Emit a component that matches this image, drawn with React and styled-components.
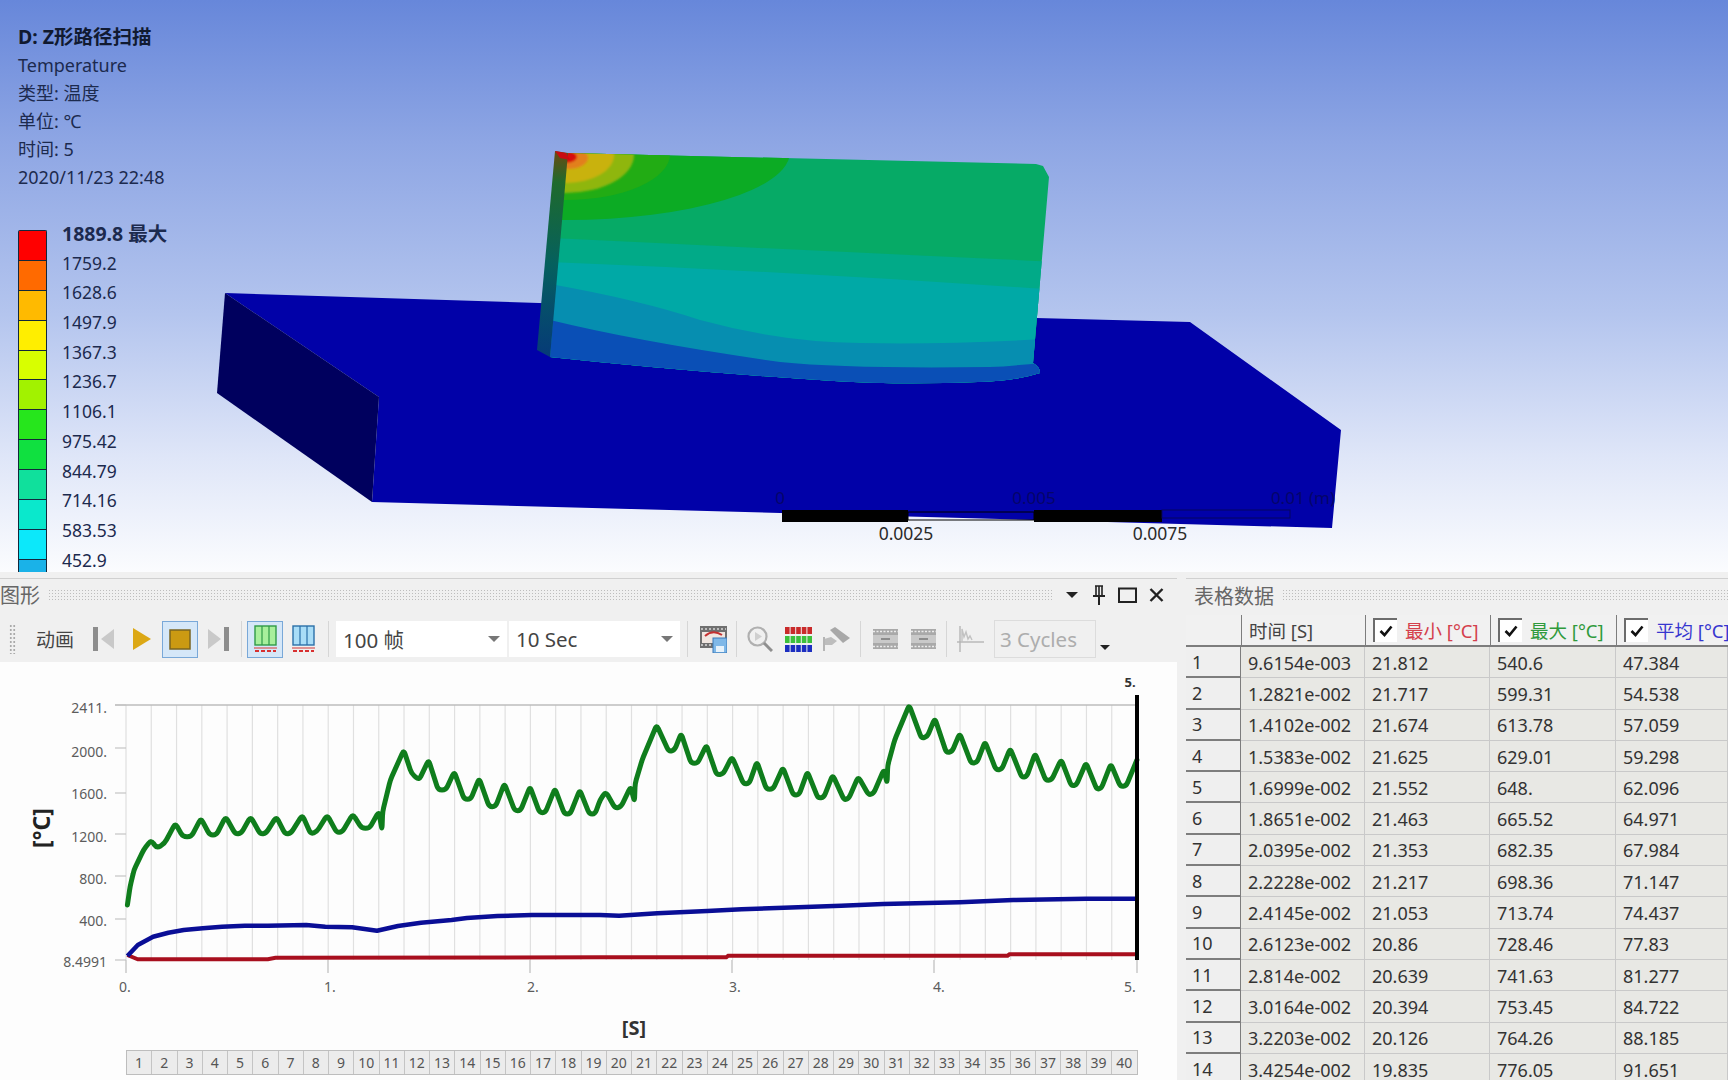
import React from 'react';
import styled, { createGlobalStyle } from 'styled-components';

const FONT = '"Noto Sans", "Noto Sans CJK SC", sans-serif';

const GlobalStyle = createGlobalStyle`
  html, body {
    margin: 0;
    padding: 0;
    background: #f0f0f0;
    overflow: hidden;
  }
  body {
    font-family: ${FONT};
  }
`;

const Page = styled.div`
  width: 1728px;
  height: 1080px;
  display: flex;
  flex-direction: column;
  overflow: hidden;
  background: #f0f0f0;
`;

/* ---------- 3D viewport ---------- */

const Viewport = styled.div`
  position: relative;
  height: 572px;
  flex: none;
  overflow: hidden;
  padding: 23px 0 0 18px;
  box-sizing: border-box;
  background: linear-gradient(#6787da 0%, #8ea6e4 25%, #b4c5ee 55%, #dfe6f8 80%, #fbfcfe 100%);
`;

const Scene = styled.svg`
  position: absolute;
  left: 0;
  top: 0;
`;

const Annotation = styled.div`
  position: relative;
  display: flex;
  flex-direction: column;
  color: #1c2a4e;
  font-size: 18px;
  line-height: 28px;
  white-space: nowrap;
`;

const AnnotationTitle = styled.div`
  font-size: 19.5px;
  font-weight: 700;
  color: #111a30;
`;

const Legend = styled.div`
  position: relative;
  display: flex;
  margin-top: 31px;
  align-items: flex-start;
  gap: 15px;
`;

const LegendBar = styled.div`
  width: 29px;
  display: flex;
  flex-direction: column;
  border: 1px solid #12283c;
  border-bottom: none;
  border-radius: 2px 2px 0 0;
  box-sizing: border-box;
  margin-top: 8px;
`;

const Swatch = styled.div`
  height: 29.9px;
  background: ${({ $color }) => $color};
  border-bottom: 1.5px solid #12283c;
  box-sizing: border-box;
`;

const LegendLabels = styled.div`
  display: flex;
  flex-direction: column;
  margin-top: -3px;
`;

const LegendLabel = styled.div`
  height: 29.7px;
  line-height: 29.7px;
  font-size: ${({ $bold }) => ($bold ? 19.5 : 17.5)}px;
  color: #1c2a4e;
  white-space: nowrap;
  font-weight: ${({ $bold }) => ($bold ? 700 : 400)};
`;

/* ---------- lower dock ---------- */

const Dock = styled.div`
  flex: 1;
  display: flex;
  min-height: 0;
  padding-top: 6px;
  gap: 9px;
`;

const LeftPanel = styled.section`
  width: 1177px;
  flex: none;
  display: flex;
  flex-direction: column;
  border-top: 1px solid #d0d0d0;
`;

const RightPanel = styled.section`
  flex: 1;
  min-width: 0;
  display: flex;
  flex-direction: column;
  border-top: 1px solid #d0d0d0;
`;

const PanelHeader = styled.header`
  height: ${({ $height }) => $height}px;
  flex: none;
  display: flex;
  align-items: center;
  gap: 8px;
  box-sizing: border-box;
  padding-left: ${({ $inset }) => $inset}px;
  padding-bottom: ${({ $lift }) => $lift || 0}px;
  color: #666;
  font-size: 20px;
`;

const Hatch = styled.div`
  flex: 1;
  height: 12px;
  background-image: radial-gradient(#bdbdbd 0.8px, transparent 1px);
  background-size: 3px 3px;
`;

const PanelControls = styled.div`
  display: flex;
  align-items: center;
  gap: 12px;
  margin: 0 13px 0 4px;
`;

const Toolbar = styled.div`
  height: 50px;
  flex: none;
  display: flex;
  align-items: center;
  gap: 2px;
  padding: 4px 0 0 9px;
  box-sizing: border-box;
  color: #444;
`;

const Grip = styled.div`
  width: 7px;
  height: 30px;
  margin-right: 18px;
  background-image: radial-gradient(#aaa 0.9px, transparent 1.1px);
  background-size: 3.5px 4px;
`;

const ToolLabel = styled.span`
  font-size: 19px;
  width: 39px;
  margin-right: 9px;
  white-space: nowrap;
`;

const ToolButton = styled.div`
  width: 36px;
  height: 37px;
  flex: none;
  display: grid;
  place-content: center;
  box-sizing: border-box;
  border: 1.5px solid ${({ $active }) => ($active ? '#79a8d8' : 'transparent')};
  background: ${({ $active }) => ($active ? '#d5e7f8' : 'transparent')};
`;

const Separator = styled.div`
  width: 1px;
  height: 36px;
  flex: none;
  background: #d6d6d6;
  margin: 0 ${({ $space }) => $space}px;
`;

const Select = styled.div`
  width: 171px;
  height: 36px;
  flex: none;
  display: flex;
  align-items: center;
  justify-content: space-between;
  box-sizing: border-box;
  padding: 0 7px;
  background: #fff;
  color: #444;
  font-size: 20.5px;
  white-space: nowrap;
`;

const Caret = styled.span`
  width: 0;
  height: 0;
  flex: none;
  border-left: ${({ $size }) => $size}px solid transparent;
  border-right: ${({ $size }) => $size}px solid transparent;
  border-top: ${({ $size }) => $size}px solid ${({ $color }) => $color};
`;

const MenuCaret = styled(Caret)`
  margin-right: 2px;
`;

const CycleBox = styled.div`
  width: 102px;
  height: 38px;
  flex: none;
  display: flex;
  align-items: center;
  box-sizing: border-box;
  margin-left: 4px;
  padding-left: 5px;
  border: 1.5px solid #dcdcdc;
  color: #adadad;
  font-size: 20.5px;
  white-space: nowrap;
`;

const CycleCaret = styled.div`
  display: flex;
  margin: 16px 0 0 2px;
`;

const ChartArea = styled.div`
  flex: 1;
  min-height: 0;
  display: flex;
  flex-direction: column;
  background: #fdfdfd;
`;

const Chart = styled.svg`
  display: block;
  flex: none;
`;

const ChartText = styled.text`
  font-family: ${FONT};
  font-size: ${({ $size }) => $size || 14}px;
  font-weight: ${({ $bold }) => ($bold ? 700 : 400)};
  fill: ${({ $color }) => $color || '#5c5c5c'};
`;

const FrameStrip = styled.div`
  display: grid;
  grid-template-columns: repeat(40, 1fr);
  width: 1012px;
  height: 25px;
  margin-left: 126px;
  box-sizing: border-box;
  border: 1px solid #bdbdbd;
  background: #ececec;
`;

const FrameCell = styled.div`
  display: grid;
  place-content: center;
  border-right: 1px solid #c4c4c4;
  color: #555;
  font-size: 14px;
  &:last-child {
    border-right: none;
  }
`;

/* ---------- table ---------- */

const Table = styled.div`
  flex: 1;
  min-height: 0;
  overflow: hidden;
  display: flex;
  flex-direction: column;
  color: #333;
  font-size: 18px;
`;

const HeaderRow = styled.div`
  height: 32px;
  flex: none;
  display: grid;
  grid-template-columns: 55px 124px 125px 126px 1fr;
  background: #f1f1f1;
  border-bottom: 2px solid #7d7d7d;
  box-sizing: border-box;
`;

const HeaderCell = styled.div`
  display: flex;
  align-items: center;
  gap: 8px;
  padding-left: 7px;
  box-sizing: border-box;
  border-left: ${({ $plain }) => ($plain ? 'none' : '1.5px solid #7d7d7d')};
  color: ${({ $color }) => $color || '#444'};
  font-size: 18.5px;
  white-space: nowrap;
`;

const CheckBox = styled.div`
  width: 24px;
  height: 24px;
  flex: none;
  display: grid;
  place-content: center;
  box-sizing: border-box;
  background: #fff;
  border-top: 2px solid #6c6c6c;
  border-left: 2px solid #6c6c6c;
`;

const DataRow = styled.div`
  height: 31.3px;
  flex: none;
  display: grid;
  grid-template-columns: 55px 124px 125px 126px 1fr;
  box-sizing: border-box;
`;

const RowHead = styled.div`
  display: flex;
  align-items: center;
  padding-left: 6px;
  background: #efefef;
  border-bottom: 2px solid #7d7d7d;
  border-right: 1.5px solid #7d7d7d;
  box-sizing: border-box;
`;

const DataCell = styled.div`
  display: flex;
  align-items: center;
  padding: 1px 0 0 7px;
  box-sizing: border-box;
  background: #e8e8e4;
  border-right: 1px solid #c9c9c9;
  border-bottom: 1px solid #c9c9c9;
  white-space: nowrap;
`;

/* ---------- data ---------- */

const LEGEND_COLORS = ['#ff0000', '#ff6a00', '#ffba00', '#ffee00', '#d8ff00', '#a2f200', '#26e61c', '#10e040', '#10e09c', '#0ae8cc', '#0ce8fa', '#1ab2e8'];
const LEGEND_LABELS = ['1889.8 最大', '1759.2', '1628.6', '1497.9', '1367.3', '1236.7', '1106.1', '975.42', '844.79', '714.16', '583.53', '452.9'];

const ROWS = [
  ['9.6154e-003', '21.812', '540.6', '47.384'],
  ['1.2821e-002', '21.717', '599.31', '54.538'],
  ['1.4102e-002', '21.674', '613.78', '57.059'],
  ['1.5383e-002', '21.625', '629.01', '59.298'],
  ['1.6999e-002', '21.552', '648.', '62.096'],
  ['1.8651e-002', '21.463', '665.52', '64.971'],
  ['2.0395e-002', '21.353', '682.35', '67.984'],
  ['2.2228e-002', '21.217', '698.36', '71.147'],
  ['2.4145e-002', '21.053', '713.74', '74.437'],
  ['2.6123e-002', '20.86', '728.46', '77.83'],
  ['2.814e-002', '20.639', '741.63', '81.277'],
  ['3.0164e-002', '20.394', '753.45', '84.722'],
  ['3.2203e-002', '20.126', '764.26', '88.185'],
  ['3.4254e-002', '19.835', '776.05', '91.651'],
];

// traces were read off two crops of the plot, so they are kept per crop and mapped to page px
const fromLeft = ([x, y]) => [x / 2.613, 680 + y / 3];
const fromRight = ([x, y]) => [600 + x / 2.613, 680 + y / 3];
const toPage = (left, right) => [...left.map(fromLeft), ...right.map(fromRight)];
const toPoints = (points) => points.map(([x, y]) => `${x.toFixed(1)},${y.toFixed(1)}`).join(' ');

// line through the points with each corner eased over a short distance, for the scalloped trace
const toRoundedPath = (points, radius) => {
  const toward = (a, b) => {
    const len = Math.hypot(b[0] - a[0], b[1] - a[1]) || 1;
    const r = Math.min(radius, len / 2);
    return [a[0] + ((b[0] - a[0]) / len) * r, a[1] + ((b[1] - a[1]) / len) * r];
  };
  let d = `M${points[0][0].toFixed(1)} ${points[0][1].toFixed(1)}`;
  for (let i = 1; i < points.length - 1; i++) {
    const start = toward(points[i], points[i - 1]);
    const end = toward(points[i], points[i + 1]);
    d += `L${start[0].toFixed(1)} ${start[1].toFixed(1)}Q${points[i][0].toFixed(1)} ${points[i][1].toFixed(1)} ${end[0].toFixed(1)} ${end[1].toFixed(1)}`;
  }
  const last = points[points.length - 1];
  return `${d}L${last[0].toFixed(1)} ${last[1].toFixed(1)}`;
};

const GREEN = toRoundedPath(toPage(
  [[333,675],[340,620],[350,570],[375,510],[395,480],[410,505],[430,490],[458,430],[478,470],[500,470],[525,415],[548,465],[565,465],[590,410],[615,462],[630,460],[655,410],[680,462],[695,460],[722,410],[745,462],[760,460],[790,405],[812,462],[828,455],[855,405],[880,458],[895,455],[922,402],[945,445],[965,445],[990,395],[998,450],[1000,395],[1020,300],[1055,210],[1075,280],[1095,300],[1120,240],[1145,330],[1165,330],[1187,275],[1213,358],[1230,358],[1252,295],[1278,380],[1295,380],[1318,310],[1345,392],[1360,392],[1385,320],[1410,398],[1425,398],[1450,325],[1475,402],[1490,402],[1515,330],[1540,402],[1555,402]],
  [[0,360],[15,335],[40,385],[55,380],[80,320],[90,365],[92,310],[110,240],[148,135],[180,215],[195,210],[212,160],[238,250],[255,250],[278,195],[305,285],[322,282],[345,230],[375,312],[390,310],[410,245],[435,328],[452,328],[478,262],[505,345],[520,345],[542,275],[570,355],[585,352],[608,285],[638,360],[650,355],[675,290],[702,345],[715,340],[742,268],[750,310],[752,255],[770,180],[808,75],[840,175],[855,170],[875,115],[905,218],[920,215],[940,160],[970,250],[985,248],[1006,185],[1035,270],[1050,268],[1072,205],[1102,292],[1115,290],[1137,220],[1165,302],[1180,300],[1205,238],[1232,318],[1245,315],[1270,248],[1298,328],[1310,325],[1335,252],[1360,320],[1375,318],[1403,240]]
), 4);

const BLUE = toPoints(toPage(
  [[333,828],[360,795],[400,770],[440,758],[480,750],[530,745],[580,740],[640,737],[700,737],[800,735],[850,740],[920,742],[985,752],[1040,738],[1100,728],[1180,720],[1220,714],[1300,708],[1390,705]],
  [[0,705],[50,707],[150,700],[280,693],[370,688],[480,683],[630,677],[740,672],[940,667],[1080,660],[1270,656],[1403,656]]
));

const RED = toPoints(toPage(
  [[333,825],[360,838],[700,838],[720,833]],
  [[0,832],[330,832],[335,827],[1065,827],[1070,823],[1403,823]]
));

const PLOT_LEFT = 126;
const PLOT_RIGHT = 1137;
const Y_TICKS = [[705, 708, '2411.'], [748, 752, '2000.'], [793, 794, '1600.'], [834, 837, '1200.'], [876, 879, '800.'], [919, 921, '400.'], [960, 962, '8.4991']];
const X_TICKS = [[126, 125, '0.'], [328, 330, '1.'], [530, 533, '2.'], [732, 735, '3.'], [934, 939, '4.'], [1137, 1130, '5.']];
const GRID_LINES = Array.from({ length: 41 }, (_, i) => PLOT_LEFT + ((PLOT_RIGHT - PLOT_LEFT) / 40) * i);
const FRAMES = Array.from({ length: 40 }, (_, i) => i + 1);

/* ---------- drawings ---------- */

const Model = () => (
  <Scene width="1728" height="572" viewBox="0 0 1728 572">
    <defs>
      <clipPath id="faceClip">
        <path d="M566 153 L1036 164 L1043 166 L1049 177 L1033 363 Q1040 367 1040 373 Q1015 381 978 382 Q900 385 834 381 Q690 372 550 357 Z" />
      </clipPath>
      <linearGradient id="sideShade" x1="0" y1="0" x2="0" y2="1">
        <stop offset="0" stopColor="#6b4a12" />
        <stop offset="0.15" stopColor="#1f6a2c" />
        <stop offset="0.55" stopColor="#05605e" />
        <stop offset="1" stopColor="#063a78" />
      </linearGradient>
      <filter id="soften"><feGaussianBlur stdDeviation="1.2" /></filter>
    </defs>

    <polygon points="225,293 539,303 1036,318 1190,322 1341,430 1332,528 372,502 379,397" fill="#0101a8" />
    <polygon points="225,293 379,397 372,502 217,393" fill="#00005e" />

    <g clipPath="url(#faceClip)">
      <rect x="540" y="140" width="520" height="250" fill="#06aa66" />
      <path d="M550 238 Q800 250 1060 262 L1060 400 L550 400 Z" fill="#01aa88" />
      <path d="M550 262 Q800 272 1060 290 L1060 400 L550 400 Z" fill="#00a9a6" />
      <path d="M550 284 Q640 300 700 320 Q780 342 860 343 Q950 345 1060 338 L1060 400 L550 400 Z" fill="#068eb0" />
      <path d="M550 320 Q640 342 780 362 Q850 369 990 367 Q1020 366 1060 360 L1060 400 L550 400 Z" fill="#0a4fb6" />
      <ellipse cx="566" cy="152" rx="224" ry="68" fill="#0cab24" />
      <ellipse cx="566" cy="154" rx="104" ry="46" fill="#22ac14" />
      <g filter="url(#soften)">
        <ellipse cx="566" cy="155" rx="68" ry="38" fill="#8fb60e" />
        <ellipse cx="566" cy="155" rx="48" ry="28" fill="#c9b20c" />
        <ellipse cx="568" cy="158" rx="20" ry="11" fill="#e2801a" />
        <ellipse cx="566" cy="157" rx="11" ry="6" fill="#d80c10" />
      </g>
    </g>
    <polygon points="555,151 568,153 550,357 537,350" fill="url(#sideShade)" />
    <polygon points="555,151 566,153 570,160 560,158" fill="#c80c10" />

    <rect x="782" y="510" width="126" height="12" fill="#000" />
    <rect x="908" y="512" width="126" height="8" fill="none" stroke="#000" strokeWidth="1" />
    <rect x="1034" y="510" width="128" height="12" fill="#000" />
    <rect x="1162" y="510" width="128" height="8" fill="none" stroke="#06065e" strokeWidth="1" />
    <ChartText x="780" y="504" $size={17} $color="#05056a" textAnchor="middle">0</ChartText>
    <ChartText x="1034" y="504" $size={17} $color="#05056a" textAnchor="middle">0.005</ChartText>
    <ChartText x="1303" y="504" $size={17} $color="#05056a" textAnchor="middle">0.01 (m)</ChartText>
    <ChartText x="906" y="540" $size={17.5} $color="#2a2a2a" textAnchor="middle">0.0025</ChartText>
    <ChartText x="1160" y="540" $size={17.5} $color="#2a2a2a" textAnchor="middle">0.0075</ChartText>
  </Scene>
);

const Pin = () => (
  <svg width="14" height="20" viewBox="0 0 14 20">
    <path d="M3 1h8M4 1v10M10 1v10M7 1v10" stroke="#222" strokeWidth="1.6" fill="none" />
    <path d="M1 11h12M7 11v9" stroke="#222" strokeWidth="2" fill="none" />
  </svg>
);

const Maximize = () => (
  <svg width="19" height="16" viewBox="0 0 19 16">
    <rect x="1" y="1.5" width="17" height="13.5" fill="none" stroke="#222" strokeWidth="2" />
  </svg>
);

const Close = () => (
  <svg width="15" height="14" viewBox="0 0 15 14">
    <path d="M1.5 1l12 12M13.5 1l-12 12" stroke="#222" strokeWidth="2.4" />
  </svg>
);

const SkipBack = () => (
  <svg width="22" height="24" viewBox="0 0 22 24">
    <rect x="0" y="0" width="5" height="24" fill="#8d8d8d" />
    <polygon points="21,2 8,12 21,22" fill="#c9c9c9" />
  </svg>
);

const Play = () => (
  <svg width="18" height="22" viewBox="0 0 18 22">
    <polygon points="0,0 18,11 0,22" fill="#dca815" />
  </svg>
);

const StopSquare = () => (
  <svg width="22" height="21" viewBox="0 0 22 21">
    <rect x="1" y="1" width="20" height="19" fill="#cb9a12" stroke="#7a6420" strokeWidth="1.5" />
  </svg>
);

const SkipForward = () => (
  <svg width="22" height="24" viewBox="0 0 22 24">
    <polygon points="1,2 14,12 1,22" fill="#c9c9c9" />
    <rect x="17" y="0" width="5" height="24" fill="#8d8d8d" />
  </svg>
);

const BandIcon = ({ fill, line }) => (
  <svg width="23" height="28" viewBox="0 0 23 28">
    <rect x="1" y="1" width="21" height="19" fill={fill} stroke={line} strokeWidth="1.4" />
    <path d="M8 1v19M15 1v19" stroke={line} strokeWidth="1.2" />
    <path d="M0 23h23" stroke="#d86a6a" strokeWidth="1.4" />
    <path d="M1 26h4M7 26h4M13 26h4M19 26h3" stroke="#d83030" strokeWidth="2" />
  </svg>
);

const FilmSave = () => (
  <svg width="27" height="27" viewBox="0 0 27 27">
    <rect x="0" y="0" width="27" height="22" fill="#6f6f6f" />
    <path d="M1 3h25M1 19h25" stroke="#d8d8d8" strokeWidth="1.6" strokeDasharray="2 2" />
    <rect x="2" y="6" width="23" height="11" fill="#f0e6e0" />
    <path d="M5 10q8-7 17-1" stroke="#c43030" strokeWidth="2" fill="none" />
    <rect x="13" y="12" width="14" height="15" fill="#7fb8e8" stroke="#3a78b8" />
    <rect x="16" y="20" width="8" height="6" fill="#e6f2fb" />
  </svg>
);

const Magnifier = () => (
  <svg width="26" height="26" viewBox="0 0 26 26">
    <circle cx="10.5" cy="10.5" r="9" fill="none" stroke="#b0b0b0" strokeWidth="2.2" />
    <polygon points="8,6 15,10.5 8,15" fill="#cfcfcf" />
    <path d="M17 17l8 8" stroke="#8f8f8f" strokeWidth="3" />
  </svg>
);

const ColorGrid = () => {
  const rows = [['#c92a2a', 1], ['#3cc03c', 10], ['#1c2ec0', 19]];
  return (
    <svg width="27" height="26" viewBox="0 0 27 26">
      {rows.map(([color, y]) =>
        [0, 1, 2, 3, 4].map((c) => <rect key={`${y}-${c}`} x={c * 5.6} y={y} width="4.6" height="7" fill={color} />)
      )}
    </svg>
  );
};

const Camera = () => (
  <svg width="27" height="25" viewBox="0 0 27 25">
    <polygon points="7,3 12,0 27,11 20,16" fill="#a8a8a8" />
    <polygon points="8,10 14,14 9,18 1,18 1,12" fill="#bdbdbd" />
    <path d="M1 10v14" stroke="#b5b5b5" strokeWidth="2" />
  </svg>
);

const FilmStrip = () => (
  <svg width="25" height="20" viewBox="0 0 25 20">
    <rect width="25" height="20" fill="#a9a9a9" />
    <path d="M0 2.5h25M0 17.5h25" stroke="#ececec" strokeWidth="1.5" strokeDasharray="2 1.5" />
    <rect y="6" width="25" height="8" fill="#c9c9c9" />
    <path d="M8 10h9" stroke="#777" strokeWidth="1.5" />
  </svg>
);

const TimePlot = () => (
  <svg width="27" height="26" viewBox="0 0 27 26">
    <path d="M3 0v26" stroke="#b5b5b5" strokeWidth="1.4" />
    <path d="M0 16h27" stroke="#b5b5b5" strokeWidth="1.4" />
    <path d="M5 16V3l2 8 2-5 2 7 2-3 2 4" stroke="#c2c2c2" strokeWidth="1.4" fill="none" />
  </svg>
);

const Check = () => (
  <svg width="14" height="12" viewBox="0 0 14 12">
    <path d="M1.5 6l4 4 7-8.5" stroke="#111" strokeWidth="2.6" fill="none" />
  </svg>
);

const TemperatureChart = () => (
  <Chart width="1177" height="388" viewBox="0 662 1177 388">
    {GRID_LINES.map((x) => (
      <line key={x} x1={x} x2={x} y1="705" y2="960" stroke="#e0e0e0" strokeWidth="1.2" />
    ))}
    <line x1="115" x2={PLOT_RIGHT} y1="705" y2="705" stroke="#bdbdbd" strokeWidth="1.4" />
    {Y_TICKS.map(([tickY, labelY, label]) => (
      <g key={label}>
        <line x1="115" x2="126" y1={tickY} y2={tickY} stroke="#c4c4c4" strokeWidth="1.2" />
        <ChartText x="107" y={labelY + 5} textAnchor="end">{label}</ChartText>
      </g>
    ))}
    {X_TICKS.map(([tickX, labelX, label]) => (
      <g key={label}>
        <line x1={tickX} x2={tickX} y1="960" y2="973" stroke="#bdbdbd" strokeWidth="1.2" />
        <ChartText x={labelX} y="992" textAnchor="middle">{label}</ChartText>
      </g>
    ))}
    <polyline points={RED} fill="none" stroke="#a80f1e" strokeWidth="4" />
    <polyline points={BLUE} fill="none" stroke="#0a0e96" strokeWidth="4.5" strokeLinejoin="round" />
    <path d={GREEN} fill="none" stroke="#0f7d1c" strokeWidth="5" strokeLinejoin="round" strokeLinecap="round" />
    <line x1={PLOT_RIGHT} x2={PLOT_RIGHT} y1="695" y2="960" stroke="#000" strokeWidth="4" />
    <ChartText x="1130" y="687" $size={13} $bold $color="#333" textAnchor="middle">5.</ChartText>
    <ChartText x="634" y="1035" $size={20} $bold $color="#333" textAnchor="middle">[S]</ChartText>
    <ChartText x="50" y="828" $size={23} $bold $color="#222" textAnchor="middle" transform="rotate(-90 50 828)">[°C]</ChartText>
  </Chart>
);

const App = () => (
  <Page>
    <GlobalStyle />
    <Viewport>
      <Model />
      <Annotation>
        <AnnotationTitle>D: Z形路径扫描</AnnotationTitle>
        <div>Temperature</div>
        <div>类型: 温度</div>
        <div>单位: ℃</div>
        <div>时间: 5</div>
        <div>2020/11/23 22:48</div>
      </Annotation>
      <Legend>
        <LegendBar>
          {LEGEND_COLORS.map((color) => <Swatch key={color} $color={color} />)}
        </LegendBar>
        <LegendLabels>
          {LEGEND_LABELS.map((label, i) => <LegendLabel key={label} $bold={i === 0}>{label}</LegendLabel>)}
        </LegendLabels>
      </Legend>
    </Viewport>

    <Dock>
      <LeftPanel>
        <PanelHeader $height={33} $inset={0} $lift={2}>
          图形
          <Hatch />
          <PanelControls>
            <MenuCaret $size={6} $color="#222" />
            <Pin />
            <Maximize />
            <Close />
          </PanelControls>
        </PanelHeader>
        <Toolbar>
          <Grip />
          <ToolLabel>动画</ToolLabel>
          <ToolButton><SkipBack /></ToolButton>
          <ToolButton><Play /></ToolButton>
          <ToolButton $active><StopSquare /></ToolButton>
          <ToolButton><SkipForward /></ToolButton>
          <Separator $space={3} />
          <ToolButton $active><BandIcon fill="#a8ef9c" line="#2f9a48" /></ToolButton>
          <ToolButton><BandIcon fill="#a9ddf7" line="#2b70a8" /></ToolButton>
          <Separator $space={5} />
          <Select>100 帧<Caret $size={6} $color="#777" /></Select>
          <Select>10 Sec<Caret $size={6} $color="#777" /></Select>
          <Separator $space={5} />
          <ToolButton><FilmSave /></ToolButton>
          <Separator $space={3} />
          <ToolButton><Magnifier /></ToolButton>
          <ToolButton><ColorGrid /></ToolButton>
          <ToolButton><Camera /></ToolButton>
          <Separator $space={4} />
          <ToolButton><FilmStrip /></ToolButton>
          <ToolButton><FilmStrip /></ToolButton>
          <Separator $space={3} />
          <ToolButton><TimePlot /></ToolButton>
          <CycleBox>3 Cycles</CycleBox>
          <CycleCaret><Caret $size={5} $color="#222" /></CycleCaret>
        </Toolbar>
        <ChartArea>
          <TemperatureChart />
          <FrameStrip>
            {FRAMES.map((n) => <FrameCell key={n}>{n}</FrameCell>)}
          </FrameStrip>
        </ChartArea>
      </LeftPanel>

      <RightPanel>
        <PanelHeader $height={36} $inset={8} $lift={4}>
          表格数据
          <Hatch />
        </PanelHeader>
        <Table>
          <HeaderRow>
            <HeaderCell $plain />
            <HeaderCell>时间 [S]</HeaderCell>
            <HeaderCell $color="#d4404c"><CheckBox><Check /></CheckBox>最小 [°C]</HeaderCell>
            <HeaderCell $color="#2f9a3c"><CheckBox><Check /></CheckBox>最大 [°C]</HeaderCell>
            <HeaderCell $color="#3636cf"><CheckBox><Check /></CheckBox>平均 [°C]</HeaderCell>
          </HeaderRow>
          {ROWS.map((row, i) => (
            <DataRow key={row[0]}>
              <RowHead>{i + 1}</RowHead>
              {row.map((value, c) => <DataCell key={c}>{value}</DataCell>)}
            </DataRow>
          ))}
        </Table>
      </RightPanel>
    </Dock>
  </Page>
);

export default App;
